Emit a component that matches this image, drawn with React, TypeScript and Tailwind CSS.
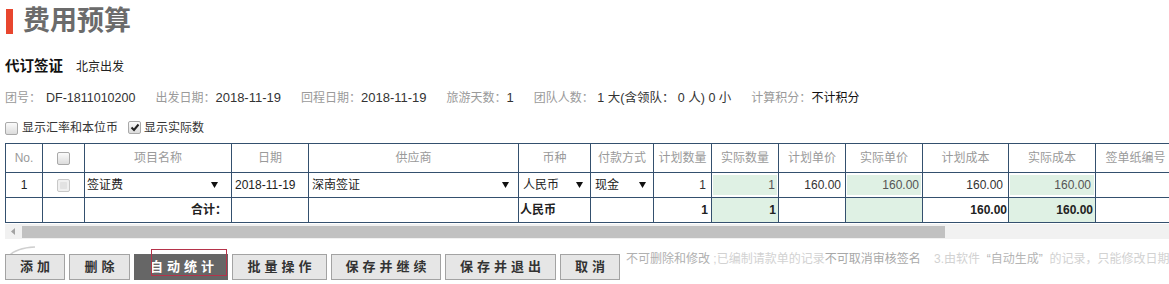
import React from "react";

const Tri = () => (
  <svg width="7" height="6" viewBox="0 0 7 6" className="shrink-0">
    <path d="M0 0H7L3.5 6Z" fill="#111" />
  </svg>
);

function Check({ checked = false, light = false }: { checked?: boolean; light?: boolean }) {
  return (
    <span
      className={`relative inline-flex items-center justify-center w-[13px] h-[13px] rounded-[2px] border ${
        light ? "border-[#c8c8c8] bg-[#f0f0f0]" : "border-[#a9a9a9] bg-linear-to-b from-[#fbfbfb] to-[#dcdcdc]"
      }`}
    >
      {light && <span className="w-[7px] h-[7px] bg-[#e2e2e2] rounded-[1px]" />}
      {checked && (
        <svg width="10" height="9" viewBox="0 0 10 9">
          <path d="M1.5 4.5L4 7L8.5 1.5" stroke="#222" strokeWidth="2" fill="none" />
        </svg>
      )}
    </span>
  );
}

const L = ({ children }: { children: React.ReactNode }) => <span className="text-[#9a9a9a] text-[12px]">{children}</span>;
const V = ({ children, cls = "text-[13px]" }: { children: React.ReactNode; cls?: string }) => (
  <span className={`text-[#333] ${cls}`}>{children}</span>
);

const th = "border border-[#34506e] p-0 text-center font-normal text-[#9a9a9a] text-[12px]";
const td = "border border-[#34506e] p-0 text-[12px] text-[#222]";

export default function App() {
  return (
    <div className="relative w-[1169px] h-[284px] overflow-hidden bg-white font-['Liberation_Sans','Noto_Sans_CJK_SC',sans-serif]">
      {/* title */}
      <div className="h-[42px] flex items-center pl-[6px]">
        <span className="w-[7px] h-[25px] bg-[#e8462e]" />
        <span className="ml-[10px] text-[27px] leading-[30px] font-bold text-[#6b6b6b]">费用预算</span>
      </div>

      <div className="mt-[11px] h-[28px] flex items-center pl-[5px]">
        <span className="text-[14.5px] font-bold text-[#111]">代订签证</span>
        <span className="ml-[13px] text-[12px] text-[#222]">北京出发</span>
      </div>

      <div className="mt-[4px] h-[24px] flex items-baseline pl-[5px] gap-[20px] whitespace-pre">
        <span>
          <L>团号：</L>
          <V cls="text-[12.5px] ml-[5px]">DF-1811010200</V>
        </span>
        <span>
          <L>出发日期：</L>
          <V>2018-11-19</V>
        </span>
        <span>
          <L>回程日期：</L>
          <V>2018-11-19</V>
        </span>
        <span>
          <L>旅游天数：</L>
          <V>1</V>
        </span>
        <span>
          <L>团队人数：</L>
          <V cls="text-[12.5px]"> 1 大(含领队： 0 人) 0 小</V>
        </span>
        <span>
          <L>计算积分：</L>
          <span className="text-[#111] text-[12px]">不计积分</span>
        </span>
      </div>

      <div className="mt-[7px] h-[24px] flex items-center pl-[5px] text-[12px] text-[#333]">
        <Check />
        <span className="ml-[4px]">显示汇率和本位币</span>
        <span className="ml-[10px]">
          <Check checked />
        </span>
        <span className="ml-[3px]">显示实际数</span>
      </div>

      {/* table */}
      <div className="mt-[3px] ml-[5px] w-[1164px] overflow-hidden">
        <table className="border-collapse table-fixed w-[1170px]">
          <colgroup>
            <col className="w-[37px]" />
            <col className="w-[42px]" />
            <col className="w-[147px]" />
            <col className="w-[77px]" />
            <col className="w-[210px]" />
            <col className="w-[72px]" />
            <col className="w-[63px]" />
            <col className="w-[58px]" />
            <col className="w-[67px]" />
            <col className="w-[67px]" />
            <col className="w-[77px]" />
            <col className="w-[86px]" />
            <col className="w-[87px]" />
            <col className="w-[80px]" />
          </colgroup>
          <thead>
            <tr className="h-[29px]">
              <th className={`${th} font-bold`}>No.</th>
              <th className={th}>
                <span className="inline-flex align-middle">
                  <Check />
                </span>
              </th>
              <th className={th}>项目名称</th>
              <th className={th}>日期</th>
              <th className={th}>供应商</th>
              <th className={th}>币种</th>
              <th className={th}>付款方式</th>
              <th className={th}>计划数量</th>
              <th className={th}>实际数量</th>
              <th className={th}>计划单价</th>
              <th className={th}>实际单价</th>
              <th className={th}>计划成本</th>
              <th className={th}>实际成本</th>
              <th className={`${th} whitespace-nowrap`}>签单纸编号</th>
            </tr>
          </thead>
          <tbody>
            <tr className="h-[25px]">
              <td className={`${td} text-center`}>1</td>
              <td className={`${td} text-center`}>
                <span className="inline-flex align-middle">
                  <Check light />
                </span>
              </td>
              <td className={td}>
                <div className="flex items-center justify-between pl-[2px] pr-[13px]">
                  <span>签证费</span>
                  <Tri />
                </div>
              </td>
              <td className={`${td} pl-[3px]`}>2018-11-19</td>
              <td className={td}>
                <div className="flex items-center justify-between pl-[3px] pr-[9px]">
                  <span>深南签证</span>
                  <Tri />
                </div>
              </td>
              <td className={td}>
                <div className="flex items-center justify-between pl-[4px] pr-[7px]">
                  <span>人民币</span>
                  <Tri />
                </div>
              </td>
              <td className={td}>
                <div className="flex items-center justify-between pl-[4px] pr-[7px]">
                  <span>现金</span>
                  <Tri />
                </div>
              </td>
              <td className={`${td} text-right pr-[5px] text-[#333]`}>1</td>
              <td className={`${td} px-[1px]`}>
                <div className="h-[20px] leading-[20px] bg-[#dff1e4] text-right pr-[2px] text-[#555]">1</div>
              </td>
              <td className={`${td} text-right pr-[4px] text-[#333]`}>160.00</td>
              <td className={`${td} px-[1px]`}>
                <div className="h-[20px] leading-[20px] bg-[#dff1e4] text-right pr-[2px] text-[#555]">160.00</div>
              </td>
              <td className={`${td} text-right pr-[5px] text-[#333]`}>160.00</td>
              <td className={`${td} px-[1px]`}>
                <div className="h-[20px] leading-[20px] bg-[#dff1e4] text-right pr-[3px] text-[#555]">160.00</div>
              </td>
              <td className={td}></td>
            </tr>
            <tr className="h-[25px]">
              <td className={td}></td>
              <td className={td}></td>
              <td className={`${td} text-right pr-[4px] font-bold text-[#111]`}>合计：</td>
              <td className={td}></td>
              <td className={td}></td>
              <td className={`${td} pl-[1px] font-bold text-[#111]`}>人民币</td>
              <td className={td}></td>
              <td className={`${td} text-right pr-[3px] font-bold text-[#111]`}>1</td>
              <td className={`${td} text-right pr-[2px] font-bold text-[#111] bg-[#dff1e4]`}>1</td>
              <td className={td}></td>
              <td className={`${td} bg-[#dff1e4]`}></td>
              <td className={`${td} text-right pr-[1px] font-bold text-[#111]`}>160.00</td>
              <td className={`${td} text-right pr-[2px] font-bold text-[#111] bg-[#dff1e4]`}>160.00</td>
              <td className={td}></td>
            </tr>
          </tbody>
        </table>
      </div>

      {/* scrollbar */}
      <div className="mt-[1px] ml-[5px] w-[1164px] h-[15px] bg-[#f1f1f1] flex items-center">
        <div className="w-[15px] h-[15px] flex items-center justify-center">
          <svg width="4" height="7" viewBox="0 0 4 7">
            <path d="M4 0V7L0 3.5Z" fill="#a3a3a3" />
          </svg>
        </div>
        <div className="ml-[2px] w-[923px] h-[12px] bg-[#c1c1c1]" />
      </div>

      {/* buttons */}
      <div className="relative mt-[15px] pl-[5px] h-[26px] flex gap-[4px] text-[13px] font-bold">
        <div className="absolute left-[626px] top-[-2px] h-[14px] leading-[14px] text-[12px] font-normal whitespace-pre text-[#d2d2d2]">
          <span className="text-[#b0b0b0]">不可删除和修改</span> ;已编制请款单的记录<span className="text-[#a8a8a8]">不可取消审核签名</span>    3.由软件  <span className="text-[#b5b5b5]">“自动生成”</span>  的记录，只能修改日期
        </div>
        <svg className="absolute left-[7px] top-[-8px]" width="30" height="12" viewBox="0 0 30 12">
          <path d="M1 11 Q 8 2 28 1" stroke="#cfcfcf" strokeWidth="1.5" fill="none" />
        </svg>
        <button className="relative z-10 w-[60px] h-[26px] border border-[#a3a3a3] bg-[#e6e6e6] text-[#333] tracking-[4px] pl-[4px]">添加</button>
        <button className="relative z-10 w-[61px] h-[26px] border border-[#a3a3a3] bg-[#e6e6e6] text-[#333] tracking-[4px] pl-[4px]">删除</button>
        <button className="relative z-10 w-[94px] h-[26px] bg-[#666] text-white tracking-[4px] pl-[6px]">自动统计</button>
        <button className="relative z-10 w-[95px] h-[26px] border border-[#a3a3a3] bg-[#e6e6e6] text-[#333] tracking-[4px] pl-[4px]">批量操作</button>
        <button className="relative z-10 w-[110px] h-[26px] border border-[#a3a3a3] bg-[#e6e6e6] text-[#333] tracking-[4px] pl-[4px]">保存并继续</button>
        <button className="relative z-10 w-[111px] h-[26px] border border-[#a3a3a3] bg-[#e6e6e6] text-[#333] tracking-[4px] pl-[4px]">保存并退出</button>
        <button className="relative z-10 w-[60px] h-[26px] border border-[#a3a3a3] bg-[#e6e6e6] text-[#333] tracking-[4px] pl-[4px]">取消</button>
        <div className="absolute z-20 left-[151px] top-[-5px] w-[76px] h-[27px] border border-[#b5334a]" />
      </div>
    </div>
  );
}
